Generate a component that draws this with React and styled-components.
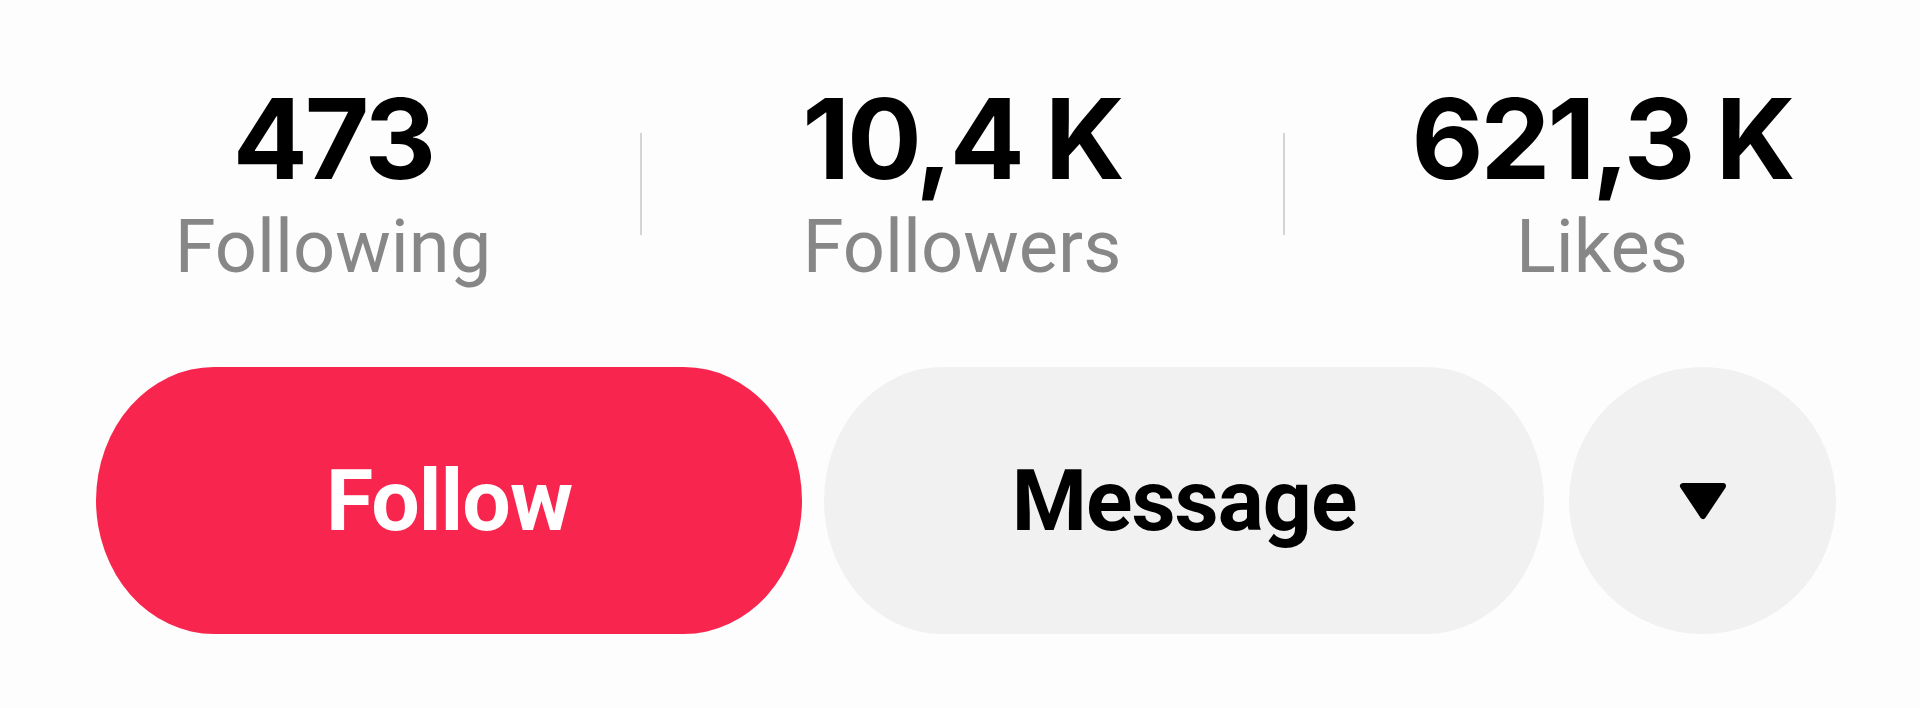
import React from 'react'
import styled, { createGlobalStyle } from 'styled-components'

const stats = [
  { value: '473', label: 'Following' },
  { value: '10,4 K', label: 'Followers' },
  { value: '621,3 K', label: 'Likes' }
]

const App = () => {
  return (
    <>
      <GlobalStyle />
      <Page>
        <StatsRow>
          {stats.map((stat, i) => (
            <React.Fragment key={stat.label}>
              {i > 0 && <Divider />}
              <Stat>
                <Value>{stat.value}</Value>
                <Label>{stat.label}</Label>
              </Stat>
            </React.Fragment>
          ))}
        </StatsRow>

        <ActionRow>
          <PillButton $variant="primary">Follow</PillButton>
          <PillButton $variant="secondary">Message</PillButton>
          <RoundButton aria-label="More">
            <svg width="52" height="42" viewBox="0 0 52 42">
              <path
                d="M6 6 L46 6 L26 36 Z"
                fill="#000"
                stroke="#000"
                strokeWidth="6"
                strokeLinejoin="round"
              />
            </svg>
          </RoundButton>
        </ActionRow>
      </Page>
    </>
  )
}

export default App

const GlobalStyle = createGlobalStyle`
  html, body {
    margin: 0;
    padding: 0;
    background: #fdfdfd;
  }
`

const Page = styled.div`
  width: 1920px;
  height: 708px;
  padding-top: 83px;
  box-sizing: border-box;
  display: flex;
  flex-direction: column;
  background: #fdfdfd;
`

const StatsRow = styled.div`
  display: grid;
  grid-template-columns: 614px 1px 642px 1px 1fr;
  padding-left: 26px;
  align-items: center;
`

const Stat = styled.div`
  display: flex;
  flex-direction: column;
  align-items: center;
  gap: 16px;
`

const Value = styled.span`
  font-family: Inter, 'Liberation Sans', sans-serif;
  font-weight: 700;
  font-size: 111px;
  line-height: 1;
  letter-spacing: -3px;
  color: #000;
`

const Label = styled.span`
  font-family: Roboto, 'Liberation Sans', sans-serif;
  font-weight: 400;
  font-size: 74px;
  line-height: 1;
  color: #878787;
`

const Divider = styled.div`
  width: 2px;
  height: 102px;
  background: #d4d4d4;
`

const ActionRow = styled.div`
  display: flex;
  gap: 22px;
  margin-top: 83px;
  padding-left: 96px;
`

const PillButton = styled.button`
  width: ${({ $variant }) => ($variant === 'primary' ? '706px' : '720px')};
  height: 267px;
  border: none;
  border-radius: 118px / 50%;
  background: ${({ $variant }) => ($variant === 'primary' ? '#f8264f' : '#f1f1f1')};
  color: ${({ $variant }) => ($variant === 'primary' ? '#ffffff' : '#000000')};
  font-family: Roboto, 'Liberation Sans', sans-serif;
  font-weight: 700;
  font-size: 86px;
  letter-spacing: -1px;
  display: flex;
  align-items: center;
  justify-content: center;
  padding: 0;
  cursor: pointer;
`

const RoundButton = styled.button`
  width: 267px;
  height: 267px;
  border: none;
  border-radius: 50%;
  background: #f1f1f1;
  display: flex;
  align-items: center;
  justify-content: center;
  padding: 0;
  margin-left: 3px;
  cursor: pointer;
`
